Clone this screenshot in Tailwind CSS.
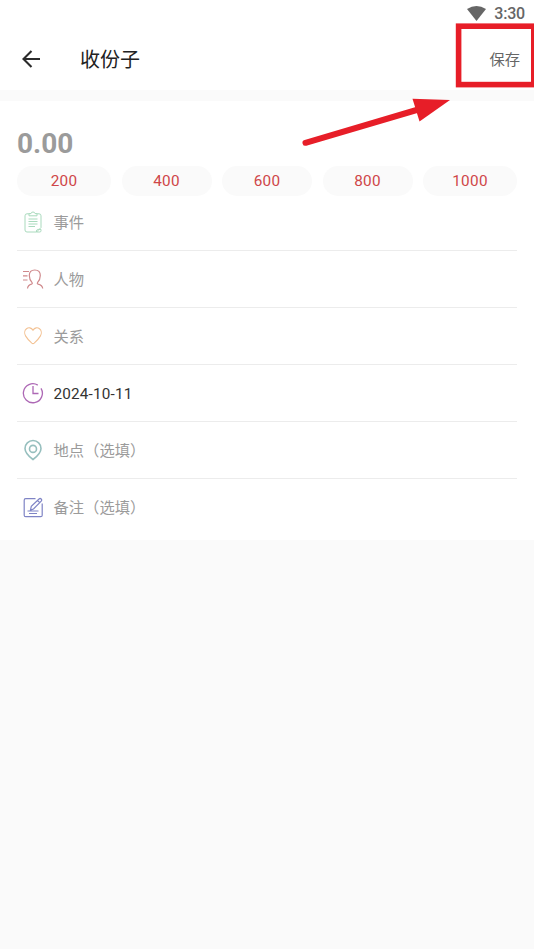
<!DOCTYPE html>
<html lang="zh-CN">
<head>
<meta charset="utf-8">
<meta name="viewport" content="width=device-width, initial-scale=1">
<title>收份子</title>
<script src="https://cdn.jsdelivr.net/npm/@tailwindcss/browser@4"></script>
</head>
<body class="relative h-[949px] w-[534px] overflow-hidden bg-[#fafafa] font-[Roboto,'Noto_Sans_CJK_SC',sans-serif] text-[15.3px] text-[#9b9b9b]">
<header class="h-[90px] bg-white">
  <div class="flex h-7 items-center justify-end gap-2 pr-[9px] text-base font-medium text-[#666]">
    <svg class="mb-0.5 h-[15px] w-[19px]" viewBox="0 0 20 15" preserveAspectRatio="none" fill="#666"><path d="M0 3Q10-3 20 3L10 15Z"/></svg>
    <span class="leading-7 tracking-[-0.2px]">3:30</span>
  </div>
  <div class="flex h-[62px] items-center pl-[22px] pr-[14px]">
    <svg class="h-[18px] w-[18px]" viewBox="0 0 18 18" fill="none" stroke="#2b2b2b" stroke-width="2.1"><path d="M18 9H2M9.5 1L1.5 9l8 8"/></svg>
    <h1 class="ml-[40px] pt-0.5 text-[20px] leading-[30px] text-[#222]">收份子</h1>
    <button class="ml-auto pt-0.5 leading-6 text-[#666]">保存</button>
  </div>
</header>
<main class="mt-[11px] h-[439px] bg-white px-[17px] pt-[26px]">
  <div class="h-[39px] text-[28px] font-bold leading-[33px]">0.00</div>
  <div class="grid h-[29px] grid-cols-[94px_90px_90px_90px_94px] justify-between text-center leading-[30px] tracking-[0.3px] text-[#cf4648]">
    <button class="rounded-full bg-[#fafafa]">200</button>
    <button class="rounded-full bg-[#fafafa]">400</button>
    <button class="rounded-full bg-[#fafafa]">600</button>
    <button class="rounded-full bg-[#fafafa]">800</button>
    <button class="rounded-full bg-[#fafafa]">1000</button>
  </div>
  <div>
    <div class="flex h-14 items-center gap-[9.5px] border-b border-[#ececec] pl-[5px]">
      <svg class="mb-0.5 h-[22px] w-[22px]" viewBox="0 0 22 22" fill="none" stroke="#a9dabd" stroke-width="1"><path d="M7 2.8H5Q3 2.8 3 4.8V19q0 2 2 2h9.5l4.5-4.5V4.8q0-2-2-2h-2M14.5 21q-.2-2.6 1.2-2.6H19v1.4q0 1.2-1.2 1.2Z"/><path d="M7 4.8V2.6h2Q9.2 1 11 1t2 1.6h2v2.2ZM6.5 8h9M6.5 10.5h9M6.5 13h9M6.5 15.5H13"/></svg>
      <span class="pt-0.5">事件</span>
    </div>
    <div class="flex h-[57px] items-center gap-[9.5px] border-b border-[#ececec] pl-[5px]">
      <svg class="h-[22px] w-[22px]" viewBox="0 0 22 22" fill="none" stroke="#cf898c" stroke-width="1.2"><path d="M1 3.5h6M1 7.8h4.5M1 12h4.5M5.5 20.5q.3-3.3 4-4.3 1.2-.4.6-1.5-2.8-3-2.8-7.1Q7.3 2 12.8 2t5.5 5.6q0 4.1-2.8 7.1-.6 1.1.6 1.5 4.3 1.1 4.6 4.3"/></svg>
      <span class="pt-0.5">人物</span>
    </div>
    <div class="flex h-[57px] items-center gap-[9.5px] border-b border-[#ececec] pl-[5px]">
      <svg class="h-[22px] w-[22px]" viewBox="0 0 22 22" fill="none" stroke="#f3c294" stroke-width="1.1"><path d="M11 5.2C9.3 2.5 6.5 2.2 4.5 3.7 2.4 5.3 2.2 8.6 3.7 11.1 5.2 13.6 8.2 16.7 9.8 18.1q1.2 1 2.4 0c1.6-1.4 4.6-4.5 6.1-7 1.5-2.5 1.3-5.8-.8-7.4-2-1.5-4.8-1.2-6.5 1.5Z"/></svg>
      <span class="pt-0.5">关系</span>
    </div>
    <div class="flex h-[57px] items-center gap-[9.5px] border-b border-[#ececec] pl-[5px]">
      <svg class="h-[22px] w-[22px]" viewBox="0 0 22 22" fill="none" stroke="#ad68b5" stroke-width="1.3"><path d="M15.8 3.1A9.5 9.5 0 1 0 19 6.3M11 4v7.5h5.5"/></svg>
      <span class="pt-0.5 tracking-[0.17px] text-[#333]">2024-10-11</span>
    </div>
    <div class="flex h-[57px] items-center gap-[9.5px] border-b border-[#ececec] pl-[5px]">
      <svg class="h-[22px] w-[22px]" viewBox="0 0 22 22" fill="none" stroke="#96bfbe" stroke-width="1.6"><path d="M11 20.5Q3 14.4 3 9.4A8 7.9 0 0 1 19 9.4Q19 14.4 11 20.5Z"/><circle cx="11" cy="9.9" r="3.5"/></svg>
      <span class="pt-0.5">地点（选填）</span>
    </div>
    <div class="flex h-[57px] items-center gap-[9.5px] pl-[5px]">
      <svg class="h-[22px] w-[22px]" viewBox="0 0 22 22" fill="none" stroke="#7f84c5" stroke-width="1.2"><path d="M13.5 1.7H3.7q-1.5 0-1.5 1.5v15q0 1.5 1.5 1.5h15q1.5 0 1.5-1.5V6.5"/><path d="M8.5 13l.8-3.7L17 2q1.2-1 2.2 0t0 2.2L11.5 12Zm7-9.5 2.2 2.2M5.5 14h11M7 16.5h8"/></svg>
      <span class="pt-0.5">备注（选填）</span>
    </div>
  </div>
</main>
<!-- Highlight around the save button and the arrow pointing to it -->
<svg class="pointer-events-none absolute left-0 top-0 h-[160px] w-[534px]" viewBox="0 0 534 160" fill="none" stroke="#e71e28">
  <rect x="458.6" y="26.2" width="75.2" height="58.4" stroke-width="5.6"/>
  <path d="M305.5 142.8L420 109" stroke-width="6" stroke-linecap="round"/>
  <path d="M412.5 98.8L450 100L419.5 121.5Z" fill="#e71e28" stroke="none"/>
</svg>
</body>
</html>
